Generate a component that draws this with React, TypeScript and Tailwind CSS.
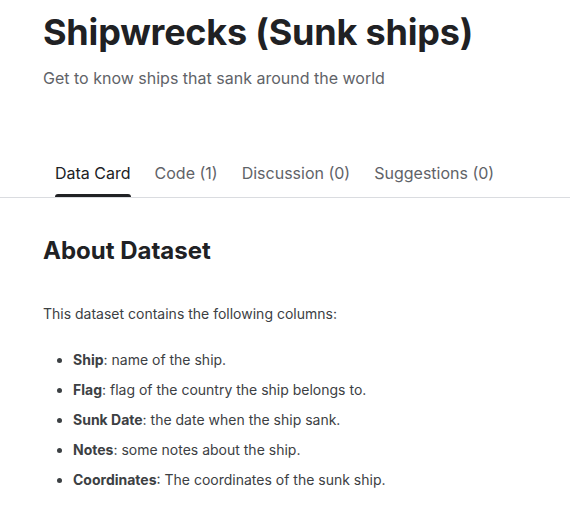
import React from 'react';

const tabs = ['Data Card', 'Code (1)', 'Discussion (0)', 'Suggestions (0)'];

const columns = [
  { name: 'Ship', desc: 'name of the ship.' },
  { name: 'Flag', desc: 'flag of the country the ship belongs to.' },
  { name: 'Sunk Date', desc: 'the date when the ship sank.' },
  { name: 'Notes', desc: 'some notes about the ship.' },
  { name: 'Coordinates', desc: 'The coordinates of the sunk ship.' },
];

const App: React.FC = () => {
  return (
    <div className="w-[570px] h-[525px] bg-white overflow-hidden font-['Inter','Liberation_Sans',sans-serif]">
      <div className="px-[43px] pt-[8px]">
        <h1 className="text-[36px] leading-[48px] font-bold tracking-[-0.2px] text-[#202124]">
          Shipwrecks (Sunk ships)
        </h1>
        <p className="mt-[10px] text-[16px] leading-[24px] text-[#5f6368]">
          Get to know ships that sank around the world
        </p>
      </div>

      <div className="mt-[68px] border-b border-[#dadce0]">
        <div className="flex gap-6 pl-[55px]">
          {tabs.map((t, i) => (
            <div key={t} className="relative pb-[12px] pt-[3px]">
              <span
                className={`text-[16px] leading-[24px] ${i === 0 ? 'text-[#202124]' : 'text-[#5f6368]'}`}
              >
                {t}
              </span>
              {i === 0 && (
                <div className="absolute left-0 right-0 bottom-0 h-[3px] rounded-t-[3px] bg-[#202124]" />
              )}
            </div>
          ))}
        </div>
      </div>

      <div className="px-[43px] pt-[37px] text-[#3c4043]">
        <h2 className="text-[24px] leading-[32px] font-bold text-[#202124]">About Dataset</h2>
        <p className="mt-[37px] text-[14px] leading-[20px]">This dataset contains the following columns:</p>
        <ul className="mt-[26px] pl-[30px] list-disc text-[14px] leading-[20px] flex flex-col gap-[10px]">
          {columns.map((c) => (
            <li key={c.name}>
              <strong className="font-bold">{c.name}</strong>: {c.desc}
            </li>
          ))}
        </ul>
      </div>
    </div>
  );
};

export default App;
